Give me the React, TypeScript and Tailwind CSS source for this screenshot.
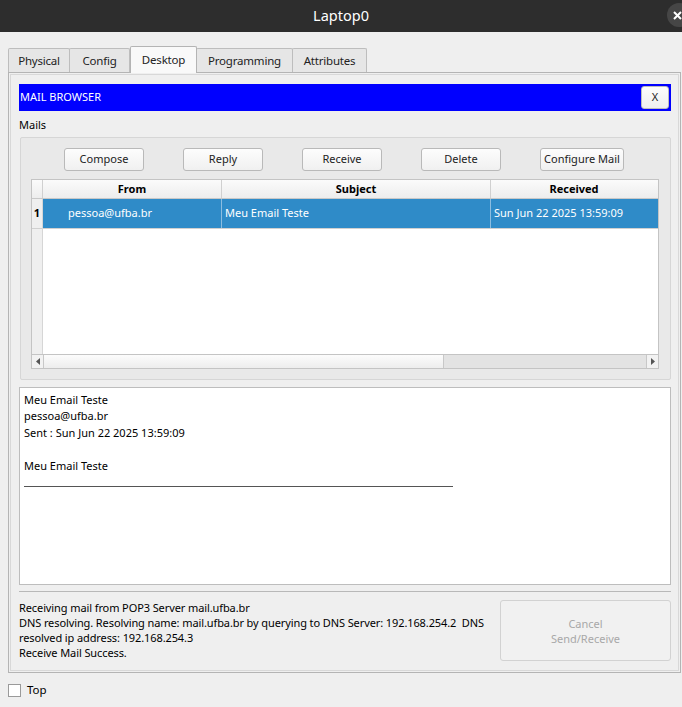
import React from "react";

const tabs = ["Physical", "Config", "Desktop", "Programming", "Attributes"];
const tabWidths = [62, 61, 67, 97, 75];
const actions = ["Compose", "Reply", "Receive", "Delete", "Configure Mail"];

function TabBar() {
  return (
    <div className="shrink-0 flex items-end pl-[8px] h-[27px] mt-[13px] text-[11.5px] tracking-[-0.2px]">
      {tabs.map((t, i) => {
        const active = t === "Desktop";
        return (
          <div
            key={t}
            style={{ width: tabWidths[i] }}
            className={
              active
                ? "h-[27px] -mb-px z-10 flex items-center justify-center border border-b-0 border-[#b4b4b4] bg-[#f9f9f9] rounded-t-[2px] text-[#222]"
                : "h-[24px] flex items-center justify-center border border-b-0 border-[#bdbdbd] -ml-px first:ml-0 bg-[#e6e6e6] rounded-t-[2px] text-[#222]"
            }
          >
            {t}
          </div>
        );
      })}
    </div>
  );
}

function Btn({ label, w }: { label: string; w: number }) {
  return (
    <button
      style={{ width: w }}
      className="h-[23px] rounded-[3px] border border-[#b9b9b9] bg-gradient-to-b from-[#fdfdfd] to-[#f0f0f0] text-[11px] text-[#222]"
    >
      {label}
    </button>
  );
}

function MailTable() {
  return (
    <div className="ml-[10px] mr-[11px] h-[190px] shrink-0 border border-[#c4c4c4] bg-white flex flex-col">
      <div className="flex h-[19px] shrink-0 border-b border-[#c8c8c8] bg-gradient-to-b from-[#fbfbfb] to-[#ededed] text-[11px] font-bold text-black">
        <div className="w-[11px] border-r border-[#d0d0d0]" />
        <div className="w-[179px] border-r border-[#d0d0d0] flex items-center justify-center">From</div>
        <div className="w-[269px] border-r border-[#d0d0d0] flex items-center justify-center">Subject</div>
        <div className="flex-1 flex items-center justify-center pr-[1px]">Received</div>
      </div>
      <div className="flex-1 flex">
        <div className="w-[11px] bg-[#efefef] border-r border-[#d6d6d6] flex flex-col">
          <div className="h-[30px] border-b border-[#d0d0d0] flex items-center justify-center text-[11px] font-bold text-black">1</div>
        </div>
        <div className="flex-1 flex flex-col">
          <div className="h-[30px] flex bg-[#2f8bc8] text-white text-[11px] border-b border-[#d0d0d0]">
            <div className="w-[179px] border-r border-[#8cbde0] flex items-center pl-[25px]">pessoa@ufba.br</div>
            <div className="w-[269px] border-r border-[#8cbde0] flex items-center pl-[3px]">Meu Email Teste</div>
            <div className="flex-1 flex items-center pl-[3px]">Sun Jun 22 2025 13:59:09</div>
          </div>
        </div>
      </div>
      <div className="h-[14px] shrink-0 border-t border-[#c4c4c4] flex bg-[#f2f2f2]">
        <div className="w-[11px] flex items-center justify-center">
          <svg width="4" height="7" viewBox="0 0 4 7"><path d="M4 0L0 3.5L4 7z" fill="#555" /></svg>
        </div>
        <div className="w-[401px] border-l border-r border-[#c8c8c8] bg-gradient-to-b from-[#fcfcfc] to-[#ededed]" />
        <div className="flex-1 bg-[#e3e3e3]" />
        <div className="w-[12px] border-l border-[#c8c8c8] flex items-center justify-center">
          <svg width="4" height="7" viewBox="0 0 4 7"><path d="M0 0L4 3.5L0 7z" fill="#555" /></svg>
        </div>
      </div>
    </div>
  );
}

export default function App() {
  return (
    <div className="w-[682px] h-[707px] overflow-hidden bg-[#efefef] flex flex-col font-['Noto_Sans',sans-serif] text-[#222]">
      <div className="h-[32px] shrink-0 bg-[#2d2d2d] relative flex items-center justify-center text-white text-[14.5px]">
        Laptop0
        <div className="absolute right-[-9px] top-[3px] w-[24px] h-[24px] rounded-full bg-[#464646] flex items-center justify-start pl-[6px]">
          <svg width="9" height="9" viewBox="0 0 9 9">
            <path d="M1 1L8 8M8 1L1 8" stroke="#fff" strokeWidth="2" />
          </svg>
        </div>
      </div>

      <TabBar />

      <div className="shrink-0 ml-[8px] w-[673px] h-[601px] border border-[#b4b4b4] bg-[#efefef] p-px">
        <div className="h-full border border-[#d8d8d8] pt-[9px] pl-[8px] pr-[7px] flex flex-col">
          <div className="h-[27px] shrink-0 bg-[#0000ff] flex items-center justify-between pl-[1px] pr-[2px]">
            <span className="text-white text-[11px]">MAIL BROWSER</span>
            <button className="w-[28px] h-[23px] rounded-[3px] border border-[#bcbcbc] bg-gradient-to-b from-[#fdfdfd] to-[#efefef] text-[11px] text-[#222]">
              X
            </button>
          </div>

          <div className="h-[26px] shrink-0 flex items-center text-[11px] text-black pt-[3px]">Mails</div>

          <div className="ml-px h-[243px] shrink-0 rounded-[2px] border border-[#d6d6d6] bg-[#e9e9e9] pt-[10px] flex flex-col">
            <div className="flex pl-[43px] gap-[39px] h-[23px] shrink-0">
              {actions.map((a) => (
                <Btn key={a} label={a} w={a === "Configure Mail" ? 84 : 80} />
              ))}
            </div>
            <div className="h-[8px] shrink-0" />
            <MailTable />
          </div>

          <div className="mt-[7px] h-[198px] shrink-0 border border-[#bdbdbd] bg-white px-[4px] pt-[4px] text-[11px] leading-[16.4px] text-black">
            <div>Meu Email Teste</div>
            <div>pessoa@ufba.br</div>
            <div>Sent : Sun Jun 22 2025 13:59:09</div>
            <div>&nbsp;</div>
            <div>Meu Email Teste</div>
            <div className="w-[429px] border-b border-[#555] h-[12px] mt-[1px]" />
          </div>

          <div className="mt-[6px] shrink-0 border-t border-[#b8b8b8]" />

          <div className="mt-[8px] shrink-0 flex justify-between">
            <div className="text-[11px] leading-[15px] tracking-[-0.1px] text-black w-[478px]">
              <div>Receiving mail from POP3 Server mail.ufba.br</div>
              <div>DNS resolving. Resolving name: mail.ufba.br by querying to DNS Server: 192.168.254.2&nbsp; DNS</div>
              <div>resolved ip address: 192.168.254.3</div>
              <div>Receive Mail Success.</div>
            </div>
            <button className="w-[171px] h-[61px] rounded-[3px] border border-[#d2d2d2] bg-[#f1f1f1] text-[11px] leading-[15px] text-[#a8a8a8]">
              Cancel
              <br />
              Send/Receive
            </button>
          </div>
        </div>
      </div>

      <div className="shrink-0 flex items-center gap-[6px] pl-[8px] mt-[10px] h-[14px] text-[11.5px] text-black">
        <div className="w-[13px] h-[13px] border border-[#9a9a9a] bg-white" />
        <span>Top</span>
      </div>
    </div>
  );
}
